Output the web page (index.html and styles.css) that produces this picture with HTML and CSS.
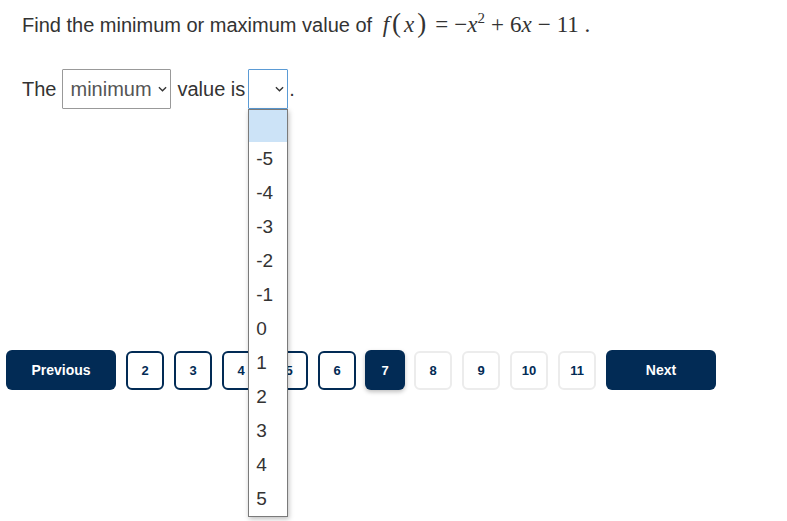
FILE: index.html
```html
<!DOCTYPE html>
<html lang="en">
<head>
<meta charset="utf-8">
<title>Quadratic minimum or maximum</title>
<link rel="stylesheet" href="styles.css">
</head>
<body>
<main class="page">
  <p class="question">Find the minimum or maximum value of <span class="math"><i>f</i><span class="paren">(</span><i>x</i><span class="paren">)</span><span class="op">=</span>−<i>x</i><sup>2</sup><span class="op">+</span>6<i>x</i><span class="op">−</span>11</span> <span class="math">.</span></p>
  <div class="answer-line">
    <span>The</span>
    <span class="select select--wide">minimum<svg class="chev" viewBox="0 0 10 6" width="9" height="6"><path d="M1 1l4 4 4-4" fill="none" stroke="#333" stroke-width="1.5"/></svg></span>
    <span>value is</span>
    <span class="select select--focus"><svg class="chev" viewBox="0 0 10 6" width="9" height="6"><path d="M1 1l4 4 4-4" fill="none" stroke="#333" stroke-width="1.5"/></svg>
      <ul class="options">
        <li class="is-active">&nbsp;</li>
        <li>-5</li><li>-4</li><li>-3</li><li>-2</li><li>-1</li>
        <li>0</li><li>1</li><li>2</li><li>3</li><li>4</li><li>5</li>
      </ul>
    </span><span class="dot">.</span>
  </div>
  <nav class="pager">
    <button class="btn btn--wide">Previous</button>
    <button class="btn btn--page">2</button>
    <button class="btn btn--page">3</button>
    <button class="btn btn--page">4</button>
    <button class="btn btn--page">5</button>
    <button class="btn btn--page">6</button>
    <button class="btn btn--current">7</button>
    <button class="btn btn--future">8</button>
    <button class="btn btn--future">9</button>
    <button class="btn btn--future">10</button>
    <button class="btn btn--future">11</button>
    <button class="btn btn--wide">Next</button>
  </nav>
</main>
</body>
</html>
```
FILE: styles.css
```css
html, body {
  margin: 0;
  padding: 0;
  background: #fff;
  min-height: 521px;
}
body {
  font-family: "Liberation Sans", Arial, sans-serif;
  color: #333;
}
.page {
  padding: 8px 0 0 0;
  min-height: 521px;
  box-sizing: border-box;
}
.question {
  margin: 0;
  padding-left: 22px;
  font-size: 20px;
  line-height: 30px;
}
.math {
  font-family: "Liberation Serif", "Times New Roman", serif;
  font-size: 23px;
  color: #333;
}
.math:first-of-type {
  margin-left: 5px;
}
.math i {
  font-style: italic;
}
.math .paren {
  font-size: 27px;
  margin: 0 3px;
}
.math .op {
  margin: 0 6px;
}
.math sup {
  font-size: 15px;
  line-height: 0;
}
.answer-line {
  margin-top: 29px;
  padding-left: 22px;
  display: flex;
  align-items: center;
  gap: 6px;
  font-size: 20px;
  height: 40px;
}
.select {
  position: relative;
  display: inline-flex;
  align-items: center;
  justify-content: flex-end;
  box-sizing: border-box;
  height: 40px;
  border: 1px solid #999;
  border-radius: 1px;
  padding: 0 3px 0 7px;
  color: #555;
}
.select--wide {
  width: 109px;
  justify-content: space-between;
}
.select--focus {
  width: 40px;
  margin-left: -3px;
  border-color: #5b9bd5;
}
.chev {
  display: block;
}
.dot {
  margin-left: -5px;
}
.options {
  position: absolute;
  left: -1px;
  top: 39px;
  width: 40px;
  box-sizing: border-box;
  margin: 0;
  padding: 0;
  list-style: none;
  background: #fff;
  border: 1px solid #7a7a7a;
  box-shadow: 1px 2px 5px rgba(0,0,0,0.25);
  z-index: 5;
}
.options li {
  height: 34px;
  line-height: 34px;
  padding-left: 7px;
  font-size: 19px;
  color: #333;
}
.options li.is-active {
  background: #cce3f7;
  height: 32px;
}
.pager {
  margin-top: 241px;
  padding-left: 6px;
  display: flex;
  gap: 10px;
  align-items: center;
}
.btn {
  box-sizing: border-box;
  height: 40px;
  border-radius: 6px;
  font-family: "Liberation Sans", Arial, sans-serif;
  font-weight: bold;
  font-size: 13px;
  padding: 0;
  cursor: pointer;
}
.btn--wide {
  width: 110px;
  background: #022b55;
  color: #fff;
  border: none;
  font-size: 14px;
}
.btn--page {
  width: 38px;
  height: 39px;
  background: #fff;
  color: #022b55;
  border: 2px solid #022b55;
}
.btn--current {
  width: 40px;
  margin: 0 -1px;
  background: #022b55;
  color: #fff;
  border: none;
  box-shadow: 0 2px 4px rgba(0,0,0,0.25);
}
.btn--future {
  width: 38px;
  height: 39px;
  background: #fff;
  color: #022b55;
  border: 2px solid #ececec;
}
```
